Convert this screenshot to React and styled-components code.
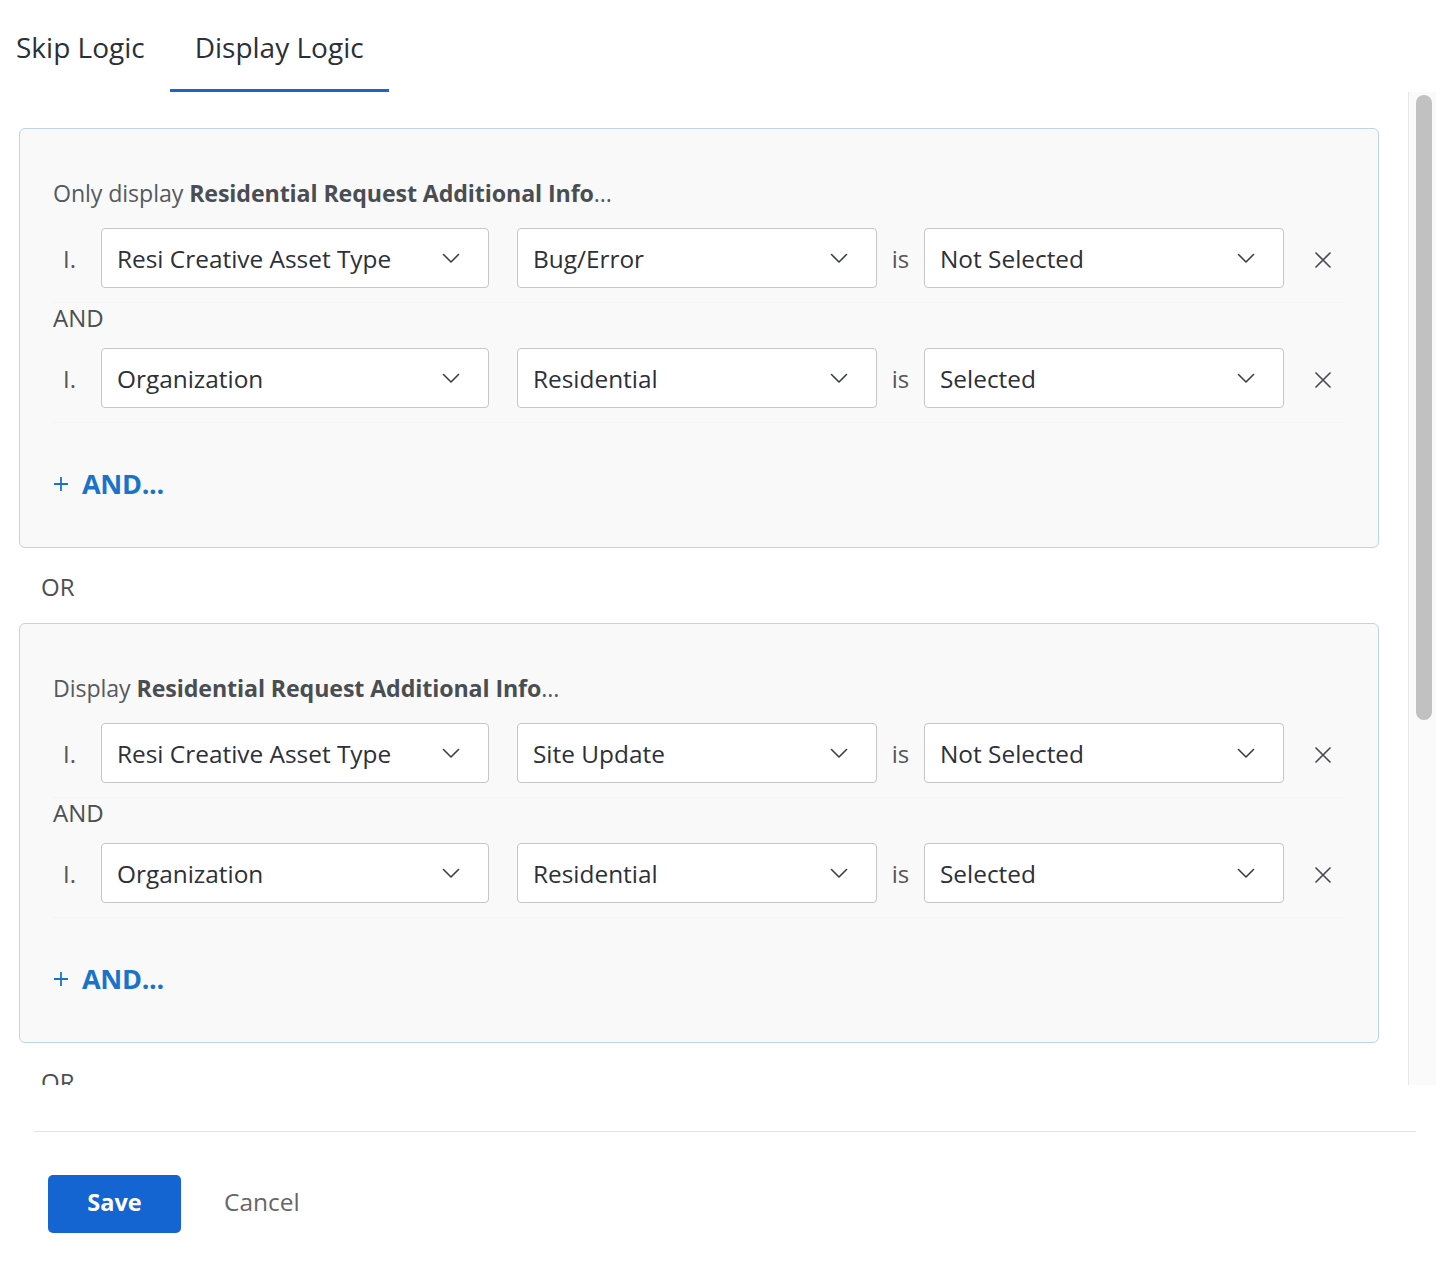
import React from 'react';
import styled, { createGlobalStyle } from 'styled-components';

const GlobalStyle = createGlobalStyle`
  body {
    margin: 0;
    background: #ffffff;
    font-family: "Open Sans", "Noto Sans", sans-serif;
    color: #2d3038;
  }
`;

const groups = [
  {
    lead: 'Only display',
    rows: [
      { field: 'Resi Creative Asset Type', value: 'Bug/Error', state: 'Not Selected' },
      { field: 'Organization', value: 'Residential', state: 'Selected' },
    ],
  },
  {
    lead: 'Display',
    rows: [
      { field: 'Resi Creative Asset Type', value: 'Site Update', state: 'Not Selected' },
      { field: 'Organization', value: 'Residential', state: 'Selected' },
    ],
  },
  {
    lead: 'Display',
    rows: [
      { field: 'Organization', value: 'Commercial', state: 'Selected' },
    ],
  },
];

function Chevron() {
  return (
    <svg width="18" height="10" viewBox="0 0 18 10" fill="none">
      <path d="M1.5 1.5l7.5 7.5 7.5-7.5" stroke="#3b3e46" strokeWidth="1.6" strokeLinecap="round" strokeLinejoin="round" />
    </svg>
  );
}

function CloseMark() {
  return (
    <svg width="18" height="18" viewBox="0 0 18 18" fill="none">
      <path d="M2 2l14 14M16 2L2 16" stroke="#4a4d55" strokeWidth="1.7" strokeLinecap="round" />
    </svg>
  );
}

function Plus() {
  return (
    <svg width="16" height="16" viewBox="0 0 16 16" fill="none">
      <path d="M8 1v14M1 8h14" stroke="#1a73c9" strokeWidth="1.8" />
    </svg>
  );
}

function Select({ text, width }) {
  return (
    <SelectBox width={width}>
      <span>{text}</span>
      <Chevron />
    </SelectBox>
  );
}

function App() {
  return (
    <>
      <GlobalStyle />
      <TabBar>
        <Tab>Skip Logic</Tab>
        <Tab active>Display Logic</Tab>
      </TabBar>
      <ScrollArea>
        <Content>
          {groups.map((g, gi) => (
            <React.Fragment key={gi}>
              {gi > 0 && <OrLabel>OR</OrLabel>}
              <Card>
                <Lead>
                  {g.lead} <b>Residential Request Additional Info</b>...
                </Lead>
                {g.rows.map((r, ri) => (
                  <React.Fragment key={ri}>
                    {ri > 0 && <AndLabel>AND</AndLabel>}
                    <RowWrap>
                      <Num>I.</Num>
                      <Select text={r.field} width={388} />
                      <Spacer />
                      <Select text={r.value} width={360} />
                      <IsLabel>is</IsLabel>
                      <Select text={r.state} width={360} />
                      <RemoveButton><CloseMark /></RemoveButton>
                    </RowWrap>
                  </React.Fragment>
                ))}
                <AddLink>
                  <Plus />
                  <span>AND...</span>
                </AddLink>
              </Card>
            </React.Fragment>
          ))}
        </Content>
        <Track>
          <Thumb />
        </Track>
      </ScrollArea>
      <Footer>
        <Divider />
        <Actions>
          <SaveButton>Save</SaveButton>
          <CancelButton>Cancel</CancelButton>
        </Actions>
      </Footer>
    </>
  );
}

export default App;

const TabBar = styled.div`
  display: flex;
  height: 92px;
  padding-left: 16px;
`

const Tab = styled.div`
  box-sizing: border-box;
  height: 92px;
  padding: 28px 25px 0;
  font-size: 28px;
  line-height: 38px;
  color: #2b2f38;
  border-bottom: 3px solid ${props => props.active ? '#1a66c6' : 'transparent'};
  &:first-child {
    padding-left: 0;
  }
`

const ScrollArea = styled.div`
  display: flex;
  height: 993px;
`

const Content = styled.div`
  width: 1408px;
  overflow: hidden;
  padding: 36px 29px 0 19px;
  box-sizing: border-box;
`

const Track = styled.div`
  width: 28px;
  background: #fafafa;
  border-left: 1px solid #e6e6e6;
  box-sizing: border-box;
  padding: 3px 4px 0 7px;
`

const Thumb = styled.div`
  height: 625px;
  border-radius: 8px;
  background: #c1c1c1;
`

const Card = styled.div`
  border: 1px solid #bcd5ea;
  border-radius: 6px;
  background: #f9f9f9;
  padding: 49px 33px 45px 33px;
`

const Lead = styled.div`
  font-size: 23.2px;
  line-height: 30px;
  color: #555a60;
  margin-bottom: 20px;
  letter-spacing: -0.1px;
  b {
    font-weight: 700;
    color: #4a4d52;
  }
`

const RowWrap = styled.div`
  display: flex;
  align-items: center;
  padding-bottom: 14px;
  border-bottom: 1px solid #f4f4f4;
  width: 1292px;
`

const Num = styled.div`
  width: 48px;
  padding-left: 10px;
  box-sizing: border-box;
  font-size: 24px;
  color: #555;
`

const SelectBox = styled.div`
  box-sizing: border-box;
  width: ${props => props.width}px;
  height: 60px;
  display: flex;
  align-items: center;
  justify-content: space-between;
  padding: 0 28px 0 15px;
  background: #ffffff;
  border: 1px solid #c6c6c6;
  border-radius: 4px;
  font-size: 24.4px;
  color: #2d3038;
`

const Spacer = styled.div`
  width: 28px;
`

const IsLabel = styled.div`
  width: 47px;
  text-align: center;
  font-size: 24px;
  color: #555;
`

const RemoveButton = styled.div`
  display: flex;
  margin: 4px 0 0 30px;
`

const AndLabel = styled.div`
  font-size: 24px;
  line-height: 30px;
  color: #4d4f54;
  margin-bottom: 15px;
`

const AddLink = styled.div`
  display: flex;
  align-items: center;
  gap: 13px;
  margin-top: 43px;
  font-size: 27px;
  line-height: 36px;
  font-weight: 700;
  color: #1a73c9;
  letter-spacing: -0.3px;
`

const OrLabel = styled.div`
  font-size: 24px;
  line-height: 30px;
  color: #4d4f54;
  margin: 24px 0 21px 22px;
`

const Footer = styled.div`
  padding-top: 46px;
`

const Divider = styled.div`
  height: 1px;
  background: #e2e2e2;
  margin: 0 20px 0 34px;
`

const Actions = styled.div`
  display: flex;
  align-items: center;
  padding: 43px 0 0 48px;
`

const SaveButton = styled.button`
  display: flex;
  align-items: center;
  justify-content: center;
  width: 133px;
  height: 58px;
  padding: 0 0 4px;
  border: none;
  border-radius: 5px;
  background: #1465d1;
  color: #ffffff;
  font-family: "Open Sans", sans-serif;
  font-size: 23.5px;
  font-weight: 700;
  line-height: 34px;
`

const CancelButton = styled.button`
  margin-left: 43px;
  padding: 0 0 4px;
  border: none;
  background: none;
  color: #666;
  font-family: "Open Sans", sans-serif;
  font-size: 24.5px;
  line-height: 34px;
`
